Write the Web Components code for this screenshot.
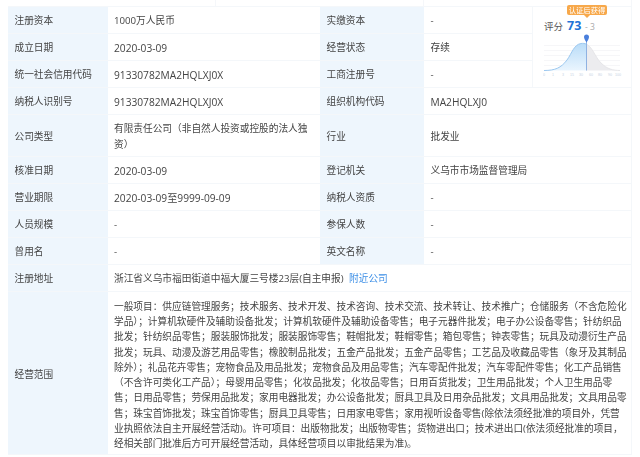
<!DOCTYPE html>
<html lang="zh">
<head>
  <meta charset="UTF-8">
  <title>工商信息</title>
  <style>
    html, body { margin: 0; background: #fff; }
    body { font-family: "Open Sans", "Noto Sans CJK TC", "Noto Sans CJK SC", sans-serif; color: #444; overflow: hidden; }
  </style>
</head>
<body>
  <info-table>
    <top-strip></top-strip>
    <info-cell label="注册资本">1000万人民币</info-cell>
    <info-cell label="实缴资本">-</info-cell>
    <score-card score="73" delta="- 3"></score-card>
    <info-cell label="成立日期" latin>2020-03-09</info-cell>
    <info-cell label="经营状态">存续</info-cell>
    <info-cell label="统一社会信用代码" latin>91330782MA2HQLXJ0X</info-cell>
    <info-cell label="工商注册号">-</info-cell>
    <info-cell label="纳税人识别号" latin>91330782MA2HQLXJ0X</info-cell>
    <info-cell label="组织机构代码" span="wide" latin>MA2HQLXJ0</info-cell>
    <info-cell label="公司类型">有限责任公司（非自然人投资或控股的法人独资）</info-cell>
    <info-cell label="行业" span="wide">批发业</info-cell>
    <info-cell label="核准日期" latin>2020-03-09</info-cell>
    <info-cell label="登记机关" span="wide">义乌市市场监督管理局</info-cell>
    <info-cell label="营业期限" latin>2020-03-09至9999-09-09</info-cell>
    <info-cell label="纳税人资质" span="wide">-</info-cell>
    <info-cell label="人员规模">-</info-cell>
    <info-cell label="参保人数" span="wide">-</info-cell>
    <info-cell label="曾用名">-</info-cell>
    <info-cell label="英文名称" span="wide">-</info-cell>
    <info-cell label="注册地址" span="full">浙江省义乌市福田街道中福大厦三号楼23层(自主申报) <a-link>附近公司</a-link></info-cell>
    <info-cell label="经营范围" span="full" class="scope">一般项目：供应链管理服务；技术服务、技术开发、技术咨询、技术交流、技术转让、技术推广；仓储服务（不含危险化<br>学品）；计算机软硬件及辅助设备批发；计算机软硬件及辅助设备零售；电子元器件批发；电子办公设备零售；针纺织品<br>批发；针纺织品零售；服装服饰批发；服装服饰零售；鞋帽批发；鞋帽零售；箱包零售；钟表零售；玩具及动漫衍生产品<br>批发；玩具、动漫及游艺用品零售；橡胶制品批发；五金产品批发；五金产品零售；工艺品及收藏品零售（象牙及其制品<br>除外）；礼品花卉零售；宠物食品及用品批发；宠物食品及用品零售；汽车零配件批发；汽车零配件零售；化工产品销售<br>（不含许可类化工产品）；母婴用品零售；化妆品批发；化妆品零售；日用百货批发；卫生用品批发；个人卫生用品零<br>售；日用品零售；劳保用品批发；家用电器批发；办公设备批发；厨具卫具及日用杂品批发；文具用品批发；文具用品零<br>售；珠宝首饰批发；珠宝首饰零售；厨具卫具零售；日用家电零售；家用视听设备零售(除依法须经批准的项目外，凭营<br>业执照依法自主开展经营活动)。许可项目：出版物批发；出版物零售；货物进出口；技术进出口(依法须经批准的项目，<br>经相关部门批准后方可开展经营活动，具体经营项目以审批结果为准)。</info-cell>
  </info-table>

<script>
  class InfoTable extends HTMLElement {
    constructor() {
      super();
      this.attachShadow({mode: 'open'}).innerHTML = `
        <style>
          :host {
            display: grid;
            box-sizing: border-box;
            width: 640px;
            height: 457px;
            padding: 0 8px 2px;
            grid-template-columns: 99.5px 212.5px 104px 108px 100px;
            grid-template-rows: 6px repeat(4, 27px) 42px repeat(5, 27px) 1fr;
            filter: blur(0.35px);
          }
        </style>
        <slot></slot>`;
    }
  }
  class TopStrip extends HTMLElement {
    constructor() {
      super();
      this.attachShadow({mode: 'open'}).innerHTML = `
        <style>
          :host {
            grid-column: 1 / -1;
            display: grid;
            grid-template-columns: 208px 208px 1fr;
          }
          div { border-right: 1px solid #f5f7fa; }
        </style>
        <div></div><div></div><div></div>`;
    }
  }
  class InfoCell extends HTMLElement {
    constructor() {
      super();
      this.attachShadow({mode: 'open'}).innerHTML = `
        <style>
          :host { display: contents; }
          .label, .value {
            display: flex;
            align-items: center;
            box-sizing: border-box;
            font-size: 9.68px;
            line-height: 16px;
            border-top: 1px solid #f4f7fa;
          }
          .label { background: #eef6fd; padding: 2px 0 0 6.5px; color: #444; }
          .value { padding: 2px 5.5px 0 6.5px; color: #444; background: #fff; }
          .value > div { min-width: 0; }
          :host([latin]) .value { font-size: 10.2px; }
          :host([span="wide"]) .value { grid-column: span 2; border-right: 1px solid #f4f7fa; }
          :host([span="full"]) .value { grid-column: span 4; border-right: 1px solid #f4f7fa; }
          :host(.scope) .value { line-height: 15.25px; white-space: nowrap; border-bottom: 1px solid #f4f7fa; padding-top: 4px; }
          :host(.scope) .label { border-bottom: 1px solid #f4f7fa; padding-top: 4px; }
        </style>
        <div class="label"></div>
        <div class="value"><div><slot></slot></div></div>`;
      this.shadowRoot.querySelector('.label').textContent = this.getAttribute('label');
    }
  }
  class ALink extends HTMLElement {
    constructor() {
      super();
      this.attachShadow({mode: 'open'}).innerHTML = `
        <style>:host { display: inline; color: #3b8ee6; margin-left: 3px; }</style><slot></slot>`;
    }
  }
  class ScoreCard extends HTMLElement {
    constructor() {
      super();
      this.attachShadow({mode: 'open'}).innerHTML = `
        <style>
          :host {
            display: flex;
            flex-direction: column;
            position: relative;
            box-sizing: border-box;
            grid-column: 5;
            grid-row: 2 / span 3;
            border: 1px solid #f4f7fa;
            border-bottom: 0;
            padding: 12px 0 0 11px;
            background: #fff;
          }
          .tag {
            position: absolute;
            left: 34px;
            top: -2px;
            width: 40px;
            height: 10px;
            border-radius: 2px;
            background: #f7a84a;
            color: #fff;
            font-size: 7.3px;
            line-height: 10px;
            text-align: center;
            white-space: nowrap;
          }
          .tag::after {
            content: "";
            position: absolute;
            left: 17px;
            top: 10px;
            border: 3px solid transparent;
            border-top-color: #f7a84a;
            border-bottom: 0;
          }
          .head { display: flex; align-items: baseline; height: 13px; line-height: 13px; }
          .name { font-size: 9.5px; color: #555; width: 23px; }
          .num { font: bold 12.5px/13px "Open Sans", sans-serif; color: #2272d6; width: 18px; }
          .delta { font: 8.5px/13px "Open Sans", sans-serif; color: #aaa; }
          svg { display: block; margin: 0 0 0 -1px; }
          text { font: 3.6px "Liberation Sans", sans-serif; fill: #c8d4e4; text-anchor: middle; }
        </style>
        <div class="tag">认证后获得</div>
        <div class="head">
          <span class="name">评分</span>
          <span class="num"></span>
          <span class="delta"></span>
        </div>
        <svg width="86" height="46" viewBox="0 0 86 46">
          <defs>
            <linearGradient id="blue" x1="0" y1="0" x2="0" y2="1">
              <stop offset="0" stop-color="#b9dcf8"/>
              <stop offset="1" stop-color="#eaf5fe"/>
            </linearGradient>
          </defs>
          <path d="M1 13.5H77M1 18.5H77M1 23.5H77M1 28.5H77M1 33.5H77" stroke="#f6f6f8" stroke-width="1"/>
          <path d="M1 38.5C12 38.5 18 36 24 28C29 21 31 12.5 38 11.5C40 11.2 42 11.5 43 12V38.5Z" fill="url(#blue)"/>
          <path d="M43 12C49 14 52 25 58 31C64 37 70 38.5 77 38.5H43Z" fill="#ececef"/>
          <path d="M1 38.5C12 38.5 18 36 24 28C29 21 31 12.5 38 11.5C40 11.2 42 11.5 43 12" fill="none" stroke="#9cc8f0" stroke-width="1"/>
          <path d="M43 12C49 14 52 25 58 31C64 37 70 38.5 77 38.5" fill="none" stroke="#e6e6e9" stroke-width="1"/>
          <path d="M43.5 9V38.5" stroke="#8fb2e2" stroke-width="1"/>
          <path d="M43.5 10.5C41.5 7.5 41 6 41 5A2.5 2.5 0 0 1 46 5C46 6 45.5 7.5 43.5 10.5Z" fill="#4a7fdc"/>
          <g>
            <text x="1" y="44">0</text><text x="10" y="44">1</text><text x="20" y="44">3</text><text x="29" y="44">15</text><text x="38" y="44">30</text><text x="48" y="44">60</text><text x="57" y="44">80</text><text x="67" y="44">90</text><text x="75" y="44">100</text>
          </g>
        </svg>`;
      this.shadowRoot.querySelector('.num').textContent = this.getAttribute('score');
      this.shadowRoot.querySelector('.delta').textContent = this.getAttribute('delta');
    }
  }
  customElements.define('info-table', InfoTable);
  customElements.define('top-strip', TopStrip);
  customElements.define('info-cell', InfoCell);
  customElements.define('a-link', ALink);
  customElements.define('score-card', ScoreCard);
</script>
</body>
</html>
